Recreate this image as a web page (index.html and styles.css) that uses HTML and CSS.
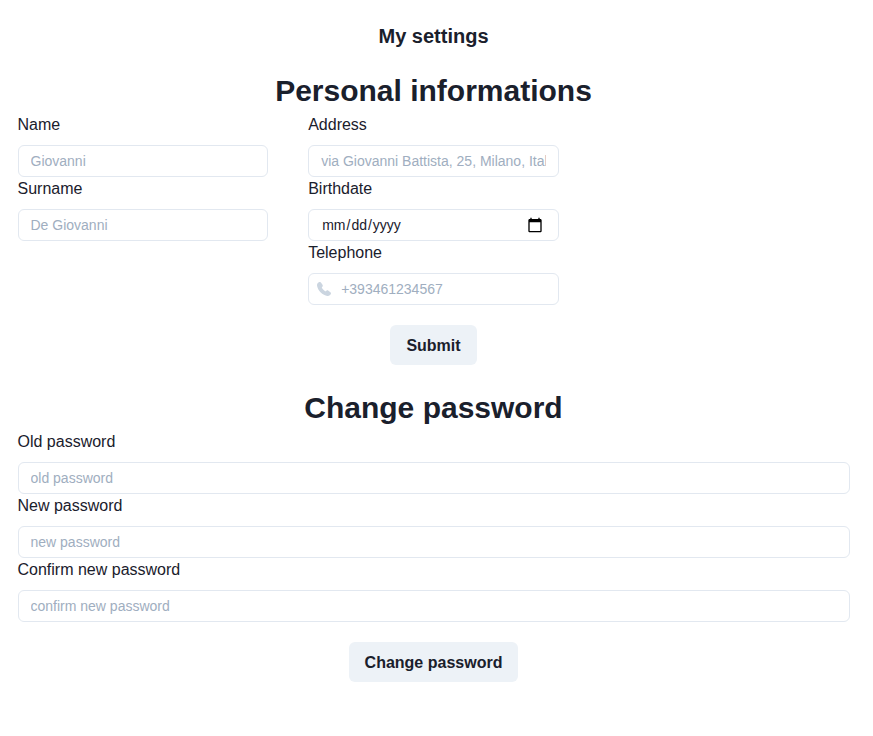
FILE: index.html
```html
<!DOCTYPE html>
<html lang="en">
<head>
<meta charset="utf-8">
<title>My settings</title>
<link rel="stylesheet" href="styles.css">
</head>
<body>
<main class="page">
  <h1 class="title">My settings</h1>
  <form class="section">
    <h2 class="heading">Personal informations</h2>
    <div class="columns">
      <div class="column">
        <label class="label" for="name">Name</label>
        <input class="input" id="name" type="text" placeholder="Giovanni">
        <label class="label" for="surname">Surname</label>
        <input class="input" id="surname" type="text" placeholder="De Giovanni">
      </div>
      <div class="column">
        <label class="label" for="address">Address</label>
        <input class="input" id="address" type="text" placeholder="via Giovanni Battista, 25, Milano, Italia">
        <label class="label" for="birthdate">Birthdate</label>
        <input class="input" id="birthdate" type="date">
        <label class="label" for="phone">Telephone</label>
        <div class="input-group">
          <svg class="phone-icon" viewBox="0 0 14 14"><path d="M2.2 0.1L0.8 1C0.1 1.6 -0.1 2.7 0.1 4C0.5 6.2 1.6 8.2 3.5 10.2C5.7 12.4 8.2 13.7 10.3 13.9C11.4 14 12.3 13.8 13 13.1L13.7 12.2C14.1 11.6 14.1 10.9 13.4 10.3L11.4 8.7C10.8 8.2 10.2 8.2 9.6 8.6L8.9 9.2C8.6 9.4 8.4 9.4 8.1 9.2C7 8.5 5.8 7.3 5 6.1C4.8 5.8 4.8 5.5 5 5.2L5.5 4.5C5.9 3.9 5.9 3.4 5.5 2.8L3.9 0.6C3.4 -0.1 2.8 -0.2 2.2 0.1Z" fill="currentColor"/></svg>
          <input class="input input-phone" id="phone" type="tel" placeholder="+393461234567">
        </div>
      </div>
    </div>
    <button class="button" type="button">Submit</button>
  </form>
  <form class="section">
    <h2 class="heading">Change password</h2>
    <label class="label" for="old">Old password</label>
    <input class="input" id="old" type="password" placeholder="old password">
    <label class="label" for="new">New password</label>
    <input class="input" id="new" type="password" placeholder="new password">
    <label class="label" for="confirm">Confirm new password</label>
    <input class="input" id="confirm" type="password" placeholder="confirm new password">
    <button class="button" type="button">Change password</button>
  </form>
</main>
</body>
</html>
```
FILE: styles.css
```css
* {
  box-sizing: border-box;
}

body {
  margin: 0;
  background: #fff;
  color: #1a202c;
  font-family: "Liberation Sans", Arial, sans-serif;
  font-size: 16px;
  line-height: 24px;
}

.page {
  width: 832px;
  margin: 0 0 0 17.5px;
  padding-top: 24px;
}

.title {
  margin: 0 0 25px;
  font-size: 20px;
  line-height: 24px;
  text-align: center;
}

.section {
  display: flex;
  flex-direction: column;
  margin-bottom: 25px;
}

.heading {
  margin: 0 0 4px;
  font-size: 30px;
  line-height: 36px;
  text-align: center;
}

.columns {
  display: grid;
  grid-template-columns: repeat(3, 250.67px);
  column-gap: 40px;
}

.column {
  display: flex;
  flex-direction: column;
}

.label {
  height: 32px;
}

.input {
  width: 100%;
  height: 32px;
  margin: 0;
  padding: 0 12px;
  border: 1px solid #e2e8f0;
  border-radius: 6px;
  outline: 0;
  background: #fff;
  color: #1a202c;
  font-family: inherit;
  font-size: 14px;
  line-height: 20px;
}

.input::placeholder {
  color: #a0aec0;
  opacity: 1;
}

.input::-webkit-calendar-picker-indicator {
  width: 16px;
  height: 16px;
  padding: 0;
  margin-right: 3px;
  background-size: 16px 16px;
}

.input-group {
  position: relative;
}

.phone-icon {
  position: absolute;
  top: 9px;
  left: 9px;
  width: 14px;
  height: 14px;
  color: #cbd5e0;
}

.input-phone {
  padding-left: 32px;
}

.button {
  align-self: center;
  height: 40px;
  margin-top: 20px;
  padding: 1px 16px 0;
  border: 0;
  border-radius: 6px;
  background: #edf2f7;
  color: #1a202c;
  font-family: inherit;
  font-size: 16px;
  font-weight: 600;
  line-height: 19.2px;
}
```
